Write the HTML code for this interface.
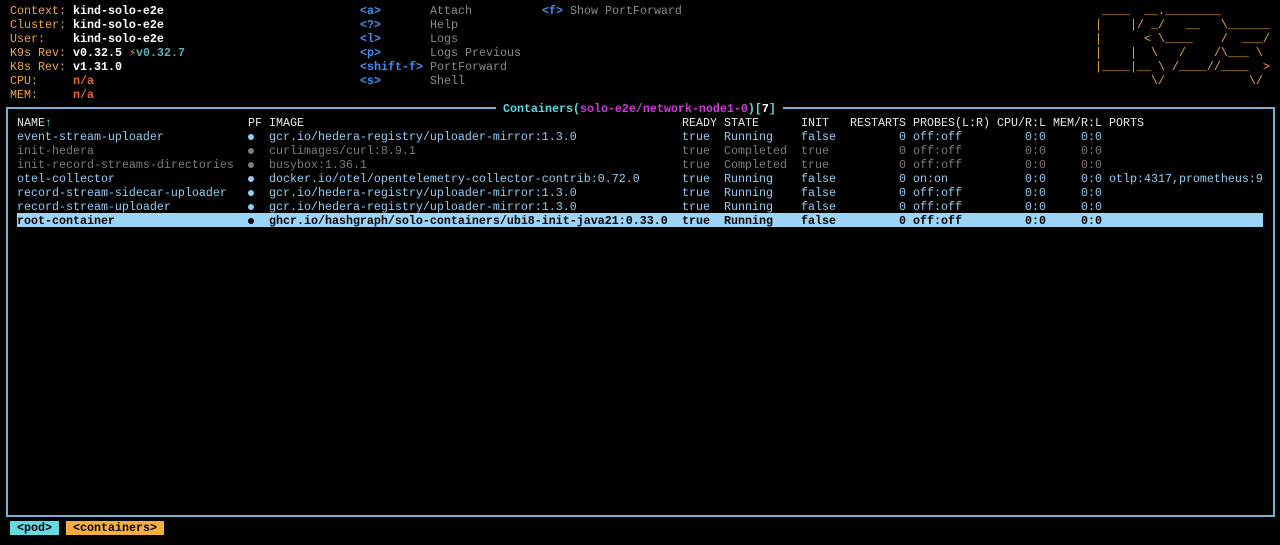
<!DOCTYPE html>
<html><head><meta charset="utf-8"><style>
html,body{margin:0;padding:0;background:#000;width:1280px;height:545px;overflow:hidden}
body{font-family:"Liberation Mono","DejaVu Sans Mono",monospace;font-size:11.67px;color:#ddd;position:relative}
.l{position:absolute;white-space:pre;line-height:14px;height:14px;margin-top:1px}
.o{color:#f0a63a}.w{color:#fff;font-weight:bold}.b{color:#3d8ef0;font-weight:bold}.g{color:#8a8a8a}.r{color:#e8662c;font-weight:bold}.t{color:#5fb0b8}
.box{position:absolute;left:6px;top:107px;width:1265px;height:406px;border:2px solid #78b0d4}
.ttl{position:absolute;top:102px;left:496px;background:#000;white-space:pre;line-height:14px;font-weight:bold}
.row{position:absolute;left:17px;width:1246px;height:14px;line-height:14px}
.row span{position:absolute;white-space:pre;top:1px}
.bl{color:#8fcdf2}.gy{color:#7c7c7c}.hd{color:#e8e8e8}
.sel{background:#9bd4f6;color:#000;font-weight:bold}
.dot{display:inline-block;width:6px;height:6px;border-radius:3px;background:currentColor;margin-top:4px}
.logo{position:absolute;left:1095px;top:4px;white-space:pre;line-height:14px;color:#f0a63a}
.f{position:absolute;top:521px;height:14px;line-height:15px;font-weight:bold;color:#000;white-space:pre}
</style></head><body>
<div class="l" style="left:10px;top:3px"><span class="o">Context: </span><span class="w">kind-solo-e2e</span></div>
<div class="l" style="left:10px;top:17px"><span class="o">Cluster: </span><span class="w">kind-solo-e2e</span></div>
<div class="l" style="left:10px;top:31px"><span class="o">User:    </span><span class="w">kind-solo-e2e</span></div>
<div class="l" style="left:10px;top:45px"><span class="o">K9s Rev: </span><span class="w">v0.32.5 </span><span class="o">⚡</span><span class="t" style="font-weight:bold">v0.32.7</span></div>
<div class="l" style="left:10px;top:59px"><span class="o">K8s Rev: </span><span class="w">v1.31.0</span></div>
<div class="l" style="left:10px;top:73px"><span class="o">CPU:     </span><span class="r">n/a</span></div>
<div class="l" style="left:10px;top:87px"><span class="o">MEM:     </span><span class="r">n/a</span></div>
<div class="l b" style="left:360px;top:3px">&lt;a&gt;</div><div class="l g" style="left:430px;top:3px">Attach</div>
<div class="l b" style="left:360px;top:17px">&lt;?&gt;</div><div class="l g" style="left:430px;top:17px">Help</div>
<div class="l b" style="left:360px;top:31px">&lt;l&gt;</div><div class="l g" style="left:430px;top:31px">Logs</div>
<div class="l b" style="left:360px;top:45px">&lt;p&gt;</div><div class="l g" style="left:430px;top:45px">Logs Previous</div>
<div class="l b" style="left:360px;top:59px">&lt;shift-f&gt;</div><div class="l g" style="left:430px;top:59px">PortForward</div>
<div class="l b" style="left:360px;top:73px">&lt;s&gt;</div><div class="l g" style="left:430px;top:73px">Shell</div>
<div class="l b" style="left:542px;top:3px">&lt;f&gt;</div><div class="l g" style="left:570px;top:3px">Show PortForward</div>
<div class="logo"> ____  __.________       
|    |/ _/   __   \______
|      &lt; \____    /  ___/
|    |  \   /    /\___ \ 
|____|__ \ /____//____  &gt;
        \/            \/ </div>
<div class="box"></div>
<div class="ttl"> <span style="color:#5fd7e0">Containers(</span><span style="color:#d23ad8">solo-e2e/network-node1-0</span><span style="color:#5fd7e0">)[</span><span style="color:#fff">7</span><span style="color:#5fd7e0">]</span> </div>

<div class="row hd" style="top:115px"><span style="left:0">NAME<b style="color:#5fd7e0">↑</b></span><span style="left:231px">PF</span><span style="left:252px">IMAGE</span><span style="left:665px">READY</span><span style="left:707px">STATE</span><span style="left:784px">INIT</span><span style="left:833px">RESTARTS</span><span style="left:896px">PROBES(L:R)</span><span style="left:980px">CPU/R:L</span><span style="left:1036px">MEM/R:L</span><span style="left:1092px">PORTS</span></div>

<div class="row bl" style="top:129px"><span style="left:0">event-stream-uploader</span><span style="left:231px"><i class="dot"></i></span><span style="left:252px">gcr.io/hedera-registry/uploader-mirror:1.3.0</span><span style="left:665px">true</span><span style="left:707px">Running</span><span style="left:784px">false</span><span style="left:882px">0</span><span style="left:896px">off:off</span><span style="left:1008px">0:0</span><span style="left:1064px">0:0</span></div>
<div class="row gy" style="top:143px"><span style="left:0">init-hedera</span><span style="left:231px"><i class="dot"></i></span><span style="left:252px">curlimages/curl:8.9.1</span><span style="left:665px">true</span><span style="left:707px">Completed</span><span style="left:784px">true</span><span style="left:882px">0</span><span style="left:896px">off:off</span><span style="left:1008px">0:0</span><span style="left:1064px">0:0</span></div>
<div class="row gy" style="top:157px"><span style="left:0">init-record-streams-directories</span><span style="left:231px"><i class="dot"></i></span><span style="left:252px">busybox:1.36.1</span><span style="left:665px">true</span><span style="left:707px">Completed</span><span style="left:784px">true</span><span style="left:882px">0</span><span style="left:896px">off:off</span><span style="left:1008px">0:0</span><span style="left:1064px">0:0</span></div>
<div class="row bl" style="top:171px"><span style="left:0">otel-collector</span><span style="left:231px"><i class="dot"></i></span><span style="left:252px">docker.io/otel/opentelemetry-collector-contrib:0.72.0</span><span style="left:665px">true</span><span style="left:707px">Running</span><span style="left:784px">false</span><span style="left:882px">0</span><span style="left:896px">on:on</span><span style="left:1008px">0:0</span><span style="left:1064px">0:0</span><span style="left:1092px">otlp:4317,prometheus:9</span></div>
<div class="row bl" style="top:185px"><span style="left:0">record-stream-sidecar-uploader</span><span style="left:231px"><i class="dot"></i></span><span style="left:252px">gcr.io/hedera-registry/uploader-mirror:1.3.0</span><span style="left:665px">true</span><span style="left:707px">Running</span><span style="left:784px">false</span><span style="left:882px">0</span><span style="left:896px">off:off</span><span style="left:1008px">0:0</span><span style="left:1064px">0:0</span></div>
<div class="row bl" style="top:199px"><span style="left:0">record-stream-uploader</span><span style="left:231px"><i class="dot"></i></span><span style="left:252px">gcr.io/hedera-registry/uploader-mirror:1.3.0</span><span style="left:665px">true</span><span style="left:707px">Running</span><span style="left:784px">false</span><span style="left:882px">0</span><span style="left:896px">off:off</span><span style="left:1008px">0:0</span><span style="left:1064px">0:0</span></div>
<div class="row sel" style="top:213px"><span style="left:0">root-container</span><span style="left:231px"><i class="dot"></i></span><span style="left:252px">ghcr.io/hashgraph/solo-containers/ubi8-init-java21:0.33.0</span><span style="left:665px">true</span><span style="left:707px">Running</span><span style="left:784px">false</span><span style="left:882px">0</span><span style="left:896px">off:off</span><span style="left:1008px">0:0</span><span style="left:1064px">0:0</span></div>

<div class="f" style="left:10px;width:49px;background:#62dbe3;text-align:center">&lt;pod&gt;</div>
<div class="f" style="left:66px;width:98px;background:#f5ae3e;text-align:center">&lt;containers&gt;</div>
</body></html>
